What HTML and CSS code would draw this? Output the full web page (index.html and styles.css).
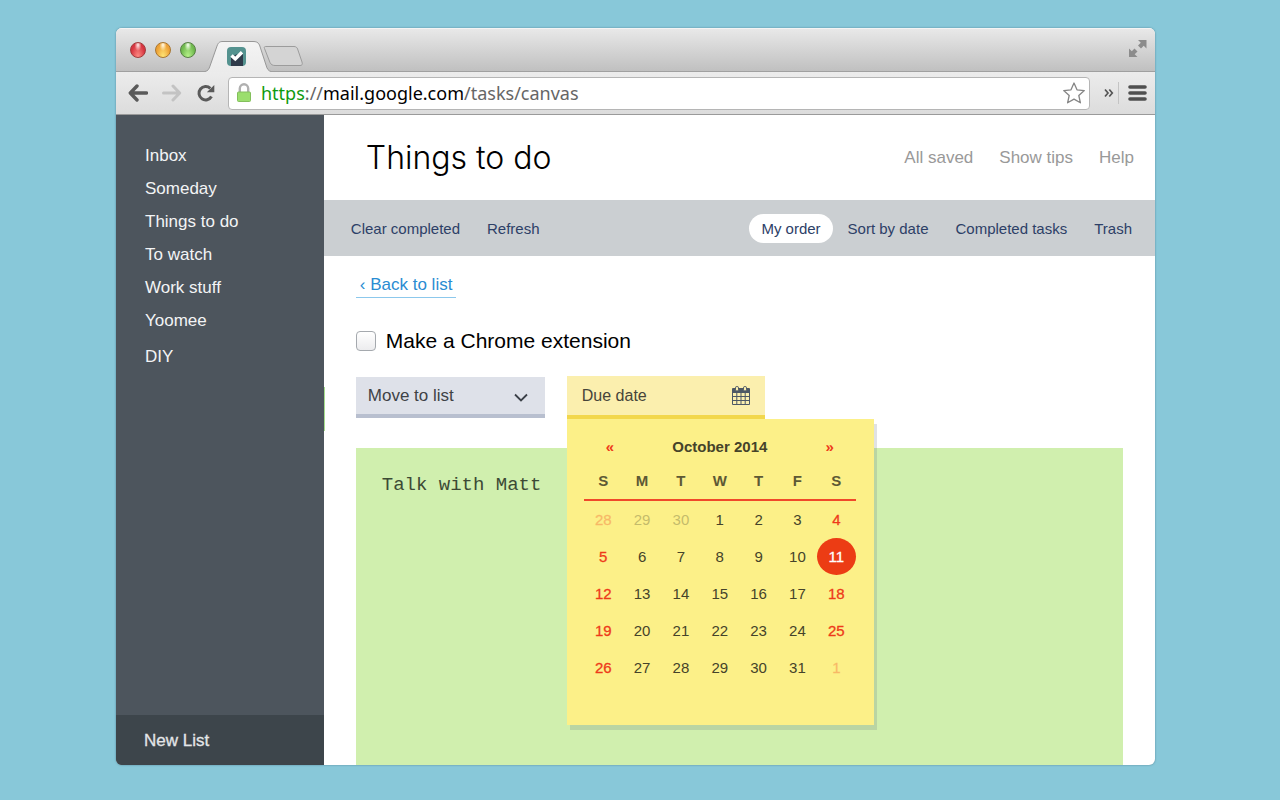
FILE: index.html
```html
<!DOCTYPE html>
<html lang="en">
<head>
<meta charset="utf-8">
<title>Things to do</title>
<link rel="stylesheet" href="styles.css">
</head>
<body>
<div class="window">
  <header class="titlebar">
    <div class="lights">
      <button class="light red" aria-label="Close"></button>
      <button class="light amber" aria-label="Minimize"></button>
      <button class="light green" aria-label="Zoom"></button>
    </div>
    <svg class="tabs" width="100" height="32" viewBox="0 0 100 32" aria-hidden="true">
      <defs>
        <linearGradient id="tabfill" x1="0" y1="0" x2="0" y2="1"><stop offset="0" stop-color="#f4f4f4"/><stop offset="1" stop-color="#ebebeb"/></linearGradient>
      </defs>
      <path d="M0 31.500C3 31 4 29 5 26L12 6C13.500 2 15 1.500 18 1.500H48C51 1.500 53 2 54.500 5L61 25C62 29 63.500 31 66 31.500V32H0z" fill="url(#tabfill)"/>
      <path d="M0 31.500C3 31 4 29 5 26L12 6C13.500 2 15 1.500 18 1.500H48C51 1.500 53 2 54.500 5L61 25C62 29 63.500 31 66 31.500" fill="none" stroke="#979797"/>
      <path d="M60.500 6.500H89C91 6.500 92 7.500 92.600 9L97 22C97.800 24.500 97 25.500 95 25.500H70C67.500 25.500 66 24.500 65 22.500L59.500 8.500C59 7.300 59.300 6.500 60.500 6.500z" fill="#d4d4d4" stroke="#9c9c9c"/>
      <rect x="22" y="7" width="19" height="19" rx="4" fill="#54928f"/>
      <path d="M26 17.500L31 14.500L38 14V26H26z" fill="#2f3b4a"/>
      <path d="M26.500 15.500L30.300 19L37 12.300" fill="none" stroke="#fff" stroke-width="3.400"/>
    </svg>
    <button class="icon-button fullscreen" aria-label="Full screen">
      <svg width="20" height="20" viewBox="0 0 20 20"><path d="M10 1h8.500v8.500l-2.800-2.800-2.700 2.800-3-3 2.800-2.700zM1 9.500l2.800 2.800 2.700-2.800 3 3-2.800 2.700L9.500 18H1z" fill="#8c8c8c"/></svg>
    </button>
  </header>

  <nav class="toolbar" aria-label="Browser">
    <button class="icon-button" aria-label="Back">
      <svg width="20" height="18" viewBox="0 0 20 18"><path d="M18.500 9H3M9 2L2.300 9L9 16" fill="none" stroke="#5a5a5a" stroke-width="3.400" stroke-linejoin="round" stroke-linecap="round"/></svg>
    </button>
    <button class="icon-button" aria-label="Forward">
      <svg width="20" height="18" viewBox="0 0 20 18"><path d="M1.500 9H17M11 2L17.700 9L11 16" fill="none" stroke="#c3c3c3" stroke-width="3" stroke-linejoin="round" stroke-linecap="round"/></svg>
    </button>
    <button class="icon-button" aria-label="Reload">
      <svg width="20" height="18" viewBox="0 0 20 18"><path d="M15.500 12.500A6.700 6.700 0 1 1 14.300 4.300" fill="none" stroke="#5a5a5a" stroke-width="3"/><path d="M18.300 1V8.300H10.800z" fill="#5a5a5a"/></svg>
    </button>
    <div class="address">
      <svg width="16" height="20" viewBox="0 0 16 20" aria-hidden="true"><path d="M3.800 10V5.500a4.200 4.200 0 0 1 8.400 0V10" fill="none" stroke="#b0b0b0" stroke-width="2.400"/><rect x="1.500" y="9" width="13" height="9.500" rx="1" fill="#9bde6e" stroke="#83bf5c"/></svg>
      <span class="url"><span class="scheme">https</span>://<span class="host">mail.google.com</span>/tasks/canvas</span>
      <button class="icon-button star" aria-label="Bookmark">
        <svg width="24" height="24" viewBox="0 0 24 24"><path d="M12 2l3 6.800 7.300.8-5.500 4.900 1.600 7.300L12 18.100l-6.400 3.700 1.600-7.300-5.500-4.900L9 8.800z" fill="#fff" stroke="#858585" stroke-width="1.300" stroke-linejoin="round"/></svg>
      </button>
    </div>
    <button class="icon-button more" aria-label="More extensions">
      <svg width="10" height="10" viewBox="0 0 10 10"><path d="M1 1.500L4 5L1 8.500M5.300 1.500L8.300 5L5.300 8.500" fill="none" stroke="#555" stroke-width="1.700"/></svg>
    </button>
    <button class="icon-button menu" aria-label="Menu">
      <svg width="20" height="18" viewBox="0 0 20 18"><path d="M2 3H17M2 9H17M2 15H17" stroke="#4f4f4f" stroke-width="3.600" stroke-linecap="round"/></svg>
    </button>
  </nav>

  <div class="app">
    <aside class="sidebar">
      <nav class="lists" aria-label="Lists">
        <a href="#">Inbox</a>
        <a href="#">Someday</a>
        <a href="#">Things to do</a>
        <a href="#">To watch</a>
        <a href="#">Work stuff</a>
        <a href="#">Yoomee</a>
        <a href="#" class="separate">DIY</a>
      </nav>
      <button class="new-list">New List</button>
    </aside>

    <main class="main">
      <header class="heading">
        <h1>Things to do</h1>
        <div class="status">
          <span>All saved</span>
          <a href="#">Show tips</a>
          <a href="#">Help</a>
        </div>
      </header>
      <div class="actions">
        <div class="group">
          <button>Clear completed</button>
          <button>Refresh</button>
        </div>
        <div class="group">
          <button class="current">My order</button>
          <button>Sort by date</button>
          <button>Completed tasks</button>
          <button>Trash</button>
        </div>
      </div>

      <section class="detail">
        <a href="#" class="back">‹ Back to list</a>
        <label class="task"><input type="checkbox">Make a Chrome extension</label>
        <div class="fields">
          <div class="move">
            <select aria-label="Move to list"><option>Move to list</option><option>Inbox</option><option>Someday</option></select>
            <svg width="14" height="10" viewBox="0 0 14 10" aria-hidden="true"><path d="M1 1.500L7 7.500L13 1.500" fill="none" stroke="#3b4048" stroke-width="1.800"/></svg>
          </div>
          <div class="due">
            <button class="due-button">Due date
              <svg width="18" height="20" viewBox="0 0 18 20" aria-hidden="true"><rect x="0" y="2" width="18" height="17" rx="1" fill="#4d5865"/><path d="M1 7H4.300V10H1zM5.300 7H8.500V10H5.300zM9.500 7H12.700V10H9.500zM13.700 7H17V10H13.700zM1 11H4.300V14H1zM5.300 11H8.500V14H5.300zM9.500 11H12.700V14H9.500zM13.700 11H17V14H13.700zM1 15H4.300V18H1zM5.300 15H8.500V18H5.300zM9.500 15H12.700V18H9.500zM13.700 15H17V18H13.700z" fill="#fbefae"/><rect x="3.500" y="0.500" width="3" height="4.500" rx="1.300" fill="#fbefae" stroke="#4d5865"/><rect x="11.500" y="0.500" width="3" height="4.500" rx="1.300" fill="#fbefae" stroke="#4d5865"/></svg>
            </button>
            <div class="calendar">
              <div class="month">
                <button aria-label="Previous month">«</button>
                <strong>October 2014</strong>
                <button aria-label="Next month">»</button>
              </div>
              <table>
                <thead><tr><th>S</th><th>M</th><th>T</th><th>W</th><th>T</th><th>F</th><th>S</th></tr></thead>
                <tbody>
                  <tr><td class="out">28</td><td class="out">29</td><td class="out">30</td><td>1</td><td>2</td><td>3</td><td>4</td></tr>
                  <tr><td>5</td><td>6</td><td>7</td><td>8</td><td>9</td><td>10</td><td class="today">11</td></tr>
                  <tr><td>12</td><td>13</td><td>14</td><td>15</td><td>16</td><td>17</td><td>18</td></tr>
                  <tr><td>19</td><td>20</td><td>21</td><td>22</td><td>23</td><td>24</td><td>25</td></tr>
                  <tr><td>26</td><td>27</td><td>28</td><td>29</td><td>30</td><td>31</td><td class="out">1</td></tr>
                </tbody>
              </table>
            </div>
          </div>
        </div>
        <textarea class="notes" aria-label="Notes" spellcheck="false">Talk with Matt</textarea>
      </section>
    </main>
  </div>
</div>
</body>
</html>
```
FILE: styles.css
```css
* {
  box-sizing: border-box;
}

body {
  margin: 0;
  height: 100vh;
  padding: 28px 125px 35px 116px;
  background: #88c8d9;
  font-family: "Liberation Sans", Arial, sans-serif;
}

button,
select,
textarea,
input {
  margin: 0;
  padding: 0;
  border: 0;
  background: none;
  font: inherit;
  color: inherit;
}

a {
  color: inherit;
  text-decoration: none;
}

svg {
  display: block;
}

.window {
  display: flex;
  flex-direction: column;
  height: 100%;
  border-radius: 6px;
  overflow: hidden;
  background: #fff;
  box-shadow: 0 0 2px rgba(40, 80, 95, 0.6);
}

.titlebar {
  display: flex;
  align-items: flex-end;
  height: 44px;
  flex: none;
  padding-left: 14px;
  padding-right: 7px;
  background: linear-gradient(#e9e9e9, #c0c0c0);
  border-bottom: 1px solid #a0a0a0;
  box-shadow: inset 0 1px #f4f4f4;
}

.lights {
  display: flex;
  gap: 9px;
  width: 75px;
  padding-bottom: 13px;
}

.light {
  width: 16px;
  height: 16px;
  border-radius: 50%;
  border: 1px solid;
}

.red {
  border-color: #a03b3b;
  background: radial-gradient(ellipse at 50% 15%, #fbd5d5 5%, transparent 35%), radial-gradient(at 50% 100%, #ff8d85, #d63440 70%);
}

.amber {
  border-color: #a8762f;
  background: radial-gradient(ellipse at 50% 15%, #fff0cf 5%, transparent 35%), radial-gradient(at 50% 100%, #ffe878, #eda035 70%);
}

.green {
  border-color: #568043;
  background: radial-gradient(ellipse at 50% 15%, #e8f9dc 5%, transparent 35%), radial-gradient(at 50% 100%, #b9f58c, #6fb84e 70%);
}

.tabs {
  margin-bottom: -1px;
}

.icon-button {
  display: grid;
  place-items: center;
  flex: none;
}

.fullscreen {
  margin-left: auto;
  padding-bottom: 12px;
}

.toolbar {
  display: flex;
  align-items: center;
  gap: 14px;
  height: 43px;
  flex: none;
  padding: 0 7px 0 12px;
  background: linear-gradient(#ececec, #dcdcdc);
  border-bottom: 1px solid #9a9a9a;
}

.address {
  display: flex;
  align-items: center;
  flex: 1;
  min-width: 0;
  height: 33px;
  margin-left: -2px;
  padding: 0 3px 0 7px;
  border: 1px solid #b5b5b5;
  border-radius: 4px;
  background: #fff;
}

.url {
  flex: 1;
  padding-left: 9px;
  font-family: "Noto Sans", sans-serif;
  font-size: 18px;
  line-height: 24px;
  white-space: nowrap;
  color: #666;
}

.scheme {
  color: #0f9a0f;
}

.host {
  color: #000;
}

.menu {
  margin-left: -10px;
  padding-left: 9px;
  height: 22px;
  border-left: 1px solid #c4c4c4;
}

.app {
  display: flex;
  flex: 1;
  min-height: 0;
}

.sidebar {
  display: flex;
  flex-direction: column;
  justify-content: space-between;
  width: 20%;
  background: #4d555d;
  color: #f3f4f5;
  font-size: 17px;
}

.lists {
  display: flex;
  flex-direction: column;
  padding: 24px 29px;
  line-height: 33px;
}

.separate {
  margin-top: 3px;
}

.new-list {
  height: 50px;
  padding: 2px 28px 0;
  background: #3d454b;
  text-align: left;
  color: #e4e6e8;
  -webkit-text-stroke: 0.3px;
}

.main {
  position: relative;
  display: flex;
  flex-direction: column;
  flex: 1;
  min-width: 0;
}

.main::before {
  content: "";
  position: absolute;
  left: 0;
  top: 272px;
  width: 1px;
  height: 44px;
  background: #a5dd8c;
}

.heading {
  display: flex;
  align-items: center;
  justify-content: space-between;
  height: 85px;
  padding: 0 21px 0 42px;
}

h1 {
  margin: 0;
  font-family: Inter, "Liberation Sans", sans-serif;
  font-size: 32px;
  font-weight: 300;
  line-height: 40px;
  color: #000;
}

.status {
  display: flex;
  gap: 26px;
  font-size: 17px;
  color: #999;
}

.actions {
  display: flex;
  align-items: center;
  justify-content: space-between;
  height: 56px;
  padding: 0 11px 0 15px;
  background: #cbcfd2;
  color: #2d4067;
  font-size: 15px;
}

.group {
  display: flex;
  gap: 3px;
}

.group button {
  height: 29px;
  padding: 0 12px;
  border-radius: 15px;
}

.group .current {
  background: #fff;
}

.detail {
  display: flex;
  flex-direction: column;
  align-items: flex-start;
  flex: 1;
  padding: 17px 32px 0;
}

.back {
  padding: 0 4px;
  border-bottom: 1px solid #8cc8ec;
  color: #2a8cd2;
  font-size: 17px;
  line-height: 24px;
}

.task {
  display: flex;
  align-items: center;
  gap: 10px;
  margin-top: 30px;
  font-size: 21px;
  line-height: 26px;
  color: #000;
}

.task input {
  appearance: none;
  width: 20px;
  height: 20px;
  border: 1px solid #a5a9ae;
  border-radius: 4px;
  background: linear-gradient(#fff, #ececee);
}

.fields {
  display: flex;
  align-items: center;
  gap: 22px;
  margin-top: 22px;
  color: #3f4246;
}

.move {
  display: grid;
  align-items: center;
  width: 189px;
}

.move select,
.move svg {
  grid-area: 1 / 1;
}

.move select {
  appearance: none;
  height: 41px;
  padding: 0 12px;
  border-bottom: 4px solid #b8bfcf;
  border-radius: 0;
  background: #dee1e9;
  font-size: 17px;
}

.move svg {
  justify-self: end;
  margin-right: 17px;
  pointer-events: none;
}

.due {
  position: relative;
}

.due-button {
  display: flex;
  align-items: center;
  justify-content: space-between;
  width: 198px;
  height: 43px;
  padding: 0 15px;
  border-bottom: 4px solid #f2d74c;
  background: #fbefae;
  font-size: 16px;
  color: #46453a;
}

.calendar {
  position: absolute;
  z-index: 1;
  top: 100%;
  left: 0;
  width: 307px;
  padding: 10px 18px 39px 17px;
  background: #fcf088;
  box-shadow: 3px 5px rgba(100, 110, 120, 0.2);
  font-size: 15px;
  color: #45432a;
}

.month {
  display: flex;
  align-items: center;
  justify-content: space-between;
  height: 36px;
  padding: 0 22px;
  line-height: 36px;
}

.month button {
  color: #ee3a1a;
  font-weight: bold;
}

.calendar table {
  width: 100%;
  table-layout: fixed;
  border-collapse: separate;
  border-spacing: 0;
  text-align: center;
}

.calendar th,
.calendar td {
  height: 37px;
  padding: 0;
}

.calendar th {
  height: 36px;
  padding-bottom: 4px;
  border-bottom: 2px solid #f0492a;
  color: #5d5935;
}

.calendar td:first-child,
.calendar td:last-child {
  color: #ee3a1a;
  -webkit-text-stroke: 0.3px;
}

.calendar .out {
  opacity: 0.3;
}

.calendar td.today {
  border-radius: 50%;
  background: #ec3c14;
  color: #fff;
}

.notes {
  align-self: stretch;
  flex: 1;
  margin-top: 29px;
  padding: 26px;
  resize: none;
  outline: 0;
  background: #d0efae;
  color: #3c4a35;
  font-family: "Liberation Mono", monospace;
  font-size: 19px;
  line-height: 22px;
}
```
